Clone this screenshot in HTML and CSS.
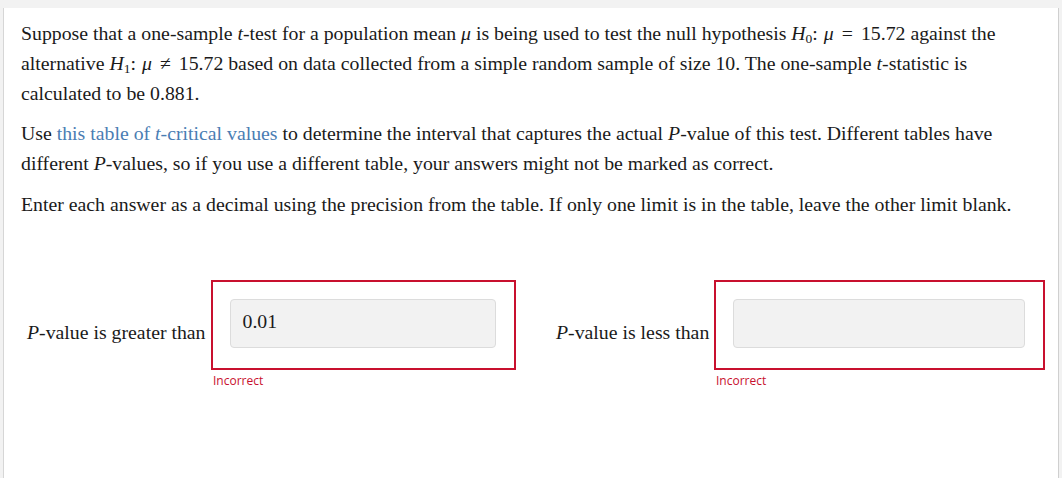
FILE: index.html
```html
<!DOCTYPE html>
<html>
<head>
<meta charset="utf-8">
<link rel="stylesheet" href="styles.css">
</head>
<body>
<div class="card">
  <p>Suppose that a one-sample <i>t</i>-test for a population mean <i class="mu">μ</i> is being used to test the null hypothesis <span class="m"><i>H</i><sub>0</sub>:<span class="sp"></span><i class="mu">μ</i><span class="rel">=</span>15.72</span> against the alternative <span class="m"><i>H</i><sub>1</sub>:<span class="sp"></span><i class="mu">μ</i><span class="rel">≠</span>15.72</span> based on data collected from a simple random sample of size 10. The one-sample <i>t</i>-statistic is calculated to be 0.881.</p>
  <p>Use <a href="#" class="link">this table of <i>t</i>-critical values</a> to determine the interval that captures the actual <i class="b">P</i>-value of this test. Different tables have different <i class="b">P</i>-values, so if you use a different table, your answers might not be marked as correct.</p>
  <p>Enter each answer as a decimal using the precision from the table. If only one limit is in the table, leave the other limit blank.</p>
  <div class="answers">
    <div class="col">
      <div class="field">
        <span class="label"><i class="b">P</i>-value is greater than</span>
        <div class="box"><div class="input">0.01</div></div>
      </div>
      <div class="fb">Incorrect</div>
    </div>
    <div class="col">
      <div class="field">
        <span class="label"><i class="b">P</i>-value is less than</span>
        <div class="box"><div class="input"></div></div>
      </div>
      <div class="fb">Incorrect</div>
    </div>
  </div>
</div>
</body>
</html>
```
FILE: styles.css
```css
html, body {
  margin: 0;
  padding: 0;
  background: #f2f2f2;
  height: 100%;
  overflow: hidden;
}
.card {
  margin: 8px 0 0 3px;
  width: 1056px;
  height: 600px;
  background: #fff;
  border-left: 1px solid #d6d6d6;
  border-right: 1px solid #cfcfcf;
  padding: 11px 0 0 17px;
  box-sizing: border-box;
  font-family: "Liberation Serif", "Times New Roman", serif;
  font-size: 19.8px;
  color: #1a1a1a;
}
p {
  margin: 0 0 10.5px 0;
  line-height: 29.9px;
  width: 1020px;
}
.m { white-space: nowrap; }
.sp { display: inline-block; width: 6px; }
sub {
  font-size: 13.5px;
  vertical-align: -3px;
  line-height: 0;
  font-style: normal;
}
i.mu { font-style: italic; }
.rel { margin: 0 8px; }
.link {
  color: #4a7db3;
  text-decoration: none;
}
i.b { font-style: italic; }
.answers {
  display: flex;
  gap: 40px;
  margin-top: 61px;
  padding-left: 6px;
}
.col {
  width: 489px;
}
.field {
  display: flex;
  align-items: center;
}
.label {
  padding-top: 15px;
  margin-right: 5px;
  white-space: nowrap;
}
.box {
  flex: 1;
  border: 2px solid #c8102e;
  padding: 17px 18px 20px 17px;
}
.input {
  background: #f2f2f2;
  border: 1px solid #dcdcdc;
  border-radius: 4px;
  box-sizing: border-box;
  height: 49px;
  padding: 8px 12px 0;
  line-height: 26px;
}
.fb {
  margin-left: 186px;
  margin-top: 2px;
  font-family: "Open Sans", sans-serif;
  font-size: 12px;
  color: #c8102e;
}
.col:nth-child(2) .fb { margin-left: 160px; }
```
